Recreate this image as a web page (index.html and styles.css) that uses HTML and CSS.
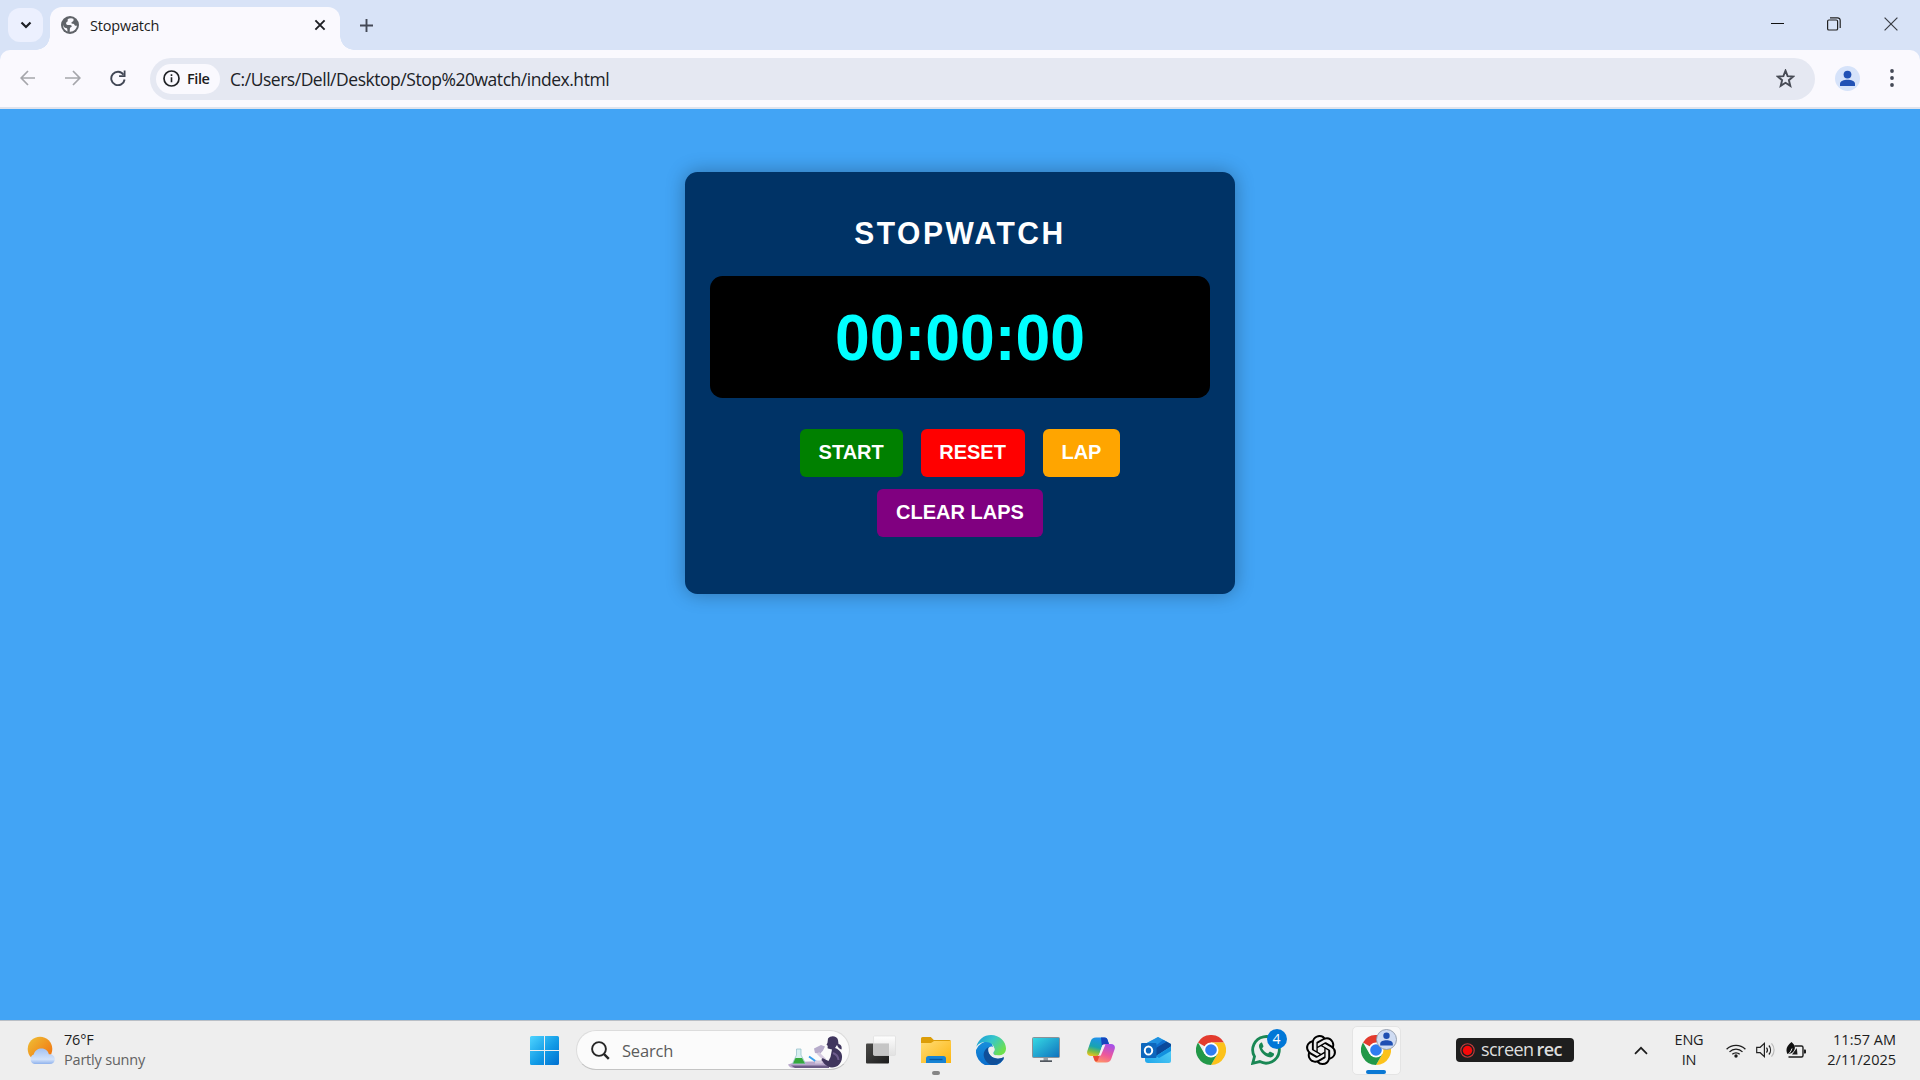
FILE: index.html
```html
<!DOCTYPE html>
<html lang="en">
<head>
<meta charset="utf-8">
<title>Stopwatch</title>
<link rel="stylesheet" href="styles.css">
</head>
<body>
<svg class="defs" width="0" height="0" aria-hidden="true">
  <defs>
    <linearGradient id="win" x1="0" y1="0" x2="1" y2="1"><stop offset="0" stop-color="#4fd4ff"/><stop offset=".55" stop-color="#129be6"/><stop offset="1" stop-color="#006fd0"/></linearGradient>
    <linearGradient id="sun" x1="0" y1="0" x2="1" y2="1"><stop offset="0" stop-color="#eec136"/><stop offset="1" stop-color="#f26a0c"/></linearGradient>
    <linearGradient id="cloud" x1="0" y1="0" x2="0" y2="1"><stop offset="0" stop-color="#a4c2f2"/><stop offset=".7" stop-color="#d3e3fb"/><stop offset="1" stop-color="#8fb2ec"/></linearGradient>
    <linearGradient id="folder" x1="0" y1="0" x2="1" y2="1"><stop offset="0" stop-color="#ffdc74"/><stop offset="1" stop-color="#fdb50f"/></linearGradient>
    <linearGradient id="screen" x1="0" y1="0" x2="1" y2="1"><stop offset="0" stop-color="#36dbe4"/><stop offset="1" stop-color="#0f70bd"/></linearGradient>
    <linearGradient id="edgeTop" x1="0" y1="0" x2="1" y2=".6"><stop offset="0" stop-color="#1796d8"/><stop offset=".5" stop-color="#36c6cb"/><stop offset="1" stop-color="#6ee04d"/></linearGradient>
    <linearGradient id="edgeLow" x1="0" y1="0" x2="0" y2="1"><stop offset="0" stop-color="#1890dc"/><stop offset="1" stop-color="#0a6ccb"/></linearGradient>
    <linearGradient id="copA" x1=".5" y1="0" x2=".2" y2="1"><stop offset="0" stop-color="#2090ee"/><stop offset=".5" stop-color="#18a4b0"/><stop offset=".75" stop-color="#76bd48"/><stop offset="1" stop-color="#f4c21a"/></linearGradient>
    <linearGradient id="copB" x1=".7" y1="0" x2=".3" y2="1"><stop offset="0" stop-color="#a650e8"/><stop offset=".55" stop-color="#ee589a"/><stop offset="1" stop-color="#ff9466"/></linearGradient>
    <linearGradient id="mail" x1="0" y1="1" x2="1" y2="0"><stop offset="0" stop-color="#1fa6ea"/><stop offset="1" stop-color="#62d8fa"/></linearGradient>
    <linearGradient id="dark" x1="0" y1="0" x2="1" y2="1"><stop offset="0" stop-color="#4a4a48"/><stop offset="1" stop-color="#1c1c1c"/></linearGradient>
    <linearGradient id="glass" x1="0" y1="0" x2="0" y2="1"><stop offset="0" stop-color="#fff"/><stop offset="1" stop-color="#dedede" stop-opacity=".8"/></linearGradient>
    <symbol id="chrome" viewBox="0 0 30 30">
      <path d="M15 15 2 7.5A15 15 0 0 1 28 7.5H15z" fill="#e33b2e"/>
      <path d="M15 7.5H28A15 15 0 0 1 15 30L21.5 18.7z" fill="#fcc21b"/>
      <path d="M2 7.5A15 15 0 0 0 15 30L21.5 18.8 8.5 18.8z" fill="#229848"/>
      <circle cx="15" cy="15" r="7.5" fill="#fff"/><circle cx="15" cy="15" r="5.8" fill="#2f7df1"/>
    </symbol>
  </defs>
</svg>

<header class="browser">
  <div class="tabstrip">
    <button class="tab-search" aria-label="Search tabs"><svg width="12" height="8" viewBox="0 0 12 8"><path d="M1.500 1.500 6 6l4.500-4.500" fill="none" stroke="#1d1f24" stroke-width="2.200"/></svg></button>
    <div class="tab">
      <svg width="18" height="18" viewBox="0 0 18 18"><circle cx="9" cy="9" r="9" fill="#5f6368"/><path d="M10 2.200c-3 .2-3.800 1-3.300 2.300.6 1.200-1.700 1.300-1.600 3 .2 1.600 2.100 1.800 3.600 1.500 1.500-.2 2.200.6 2 1.600-.2.900-1.700.8-1.800 1.800L8.700 15.800C13 16 15.800 12.800 15.900 9.600c-1.300.7-2.300-.1-2.600-1-.5-1-1.500-.6-2.500-1-.8-.4-.3-1.600.6-1.900 1.200-.4 1.500-1.500.9-2.900z" fill="#faf9fe"/><path d="M2.200 8.500c.3 3.500 2.300 3.200 3.500 3.800 1 .6.500 1.900.9 3.100C3.800 14.500 1.600 11.500 2.200 8.500z" fill="#faf9fe"/></svg>
      <span class="tab-title">Stopwatch</span>
      <svg class="tab-close" width="12" height="12" viewBox="0 0 12 12"><path d="m1.400 1.400 9.200 9.200m0-9.200-9.200 9.200" stroke="#1d1f24" stroke-width="1.900"/></svg>
    </div>
    <svg class="new-tab" width="13" height="13" viewBox="0 0 13 13"><path d="M6.500 0v13M0 6.500h13" stroke="#444956" stroke-width="1.900"/></svg>
    <div class="window-controls">
      <svg width="13" height="13" viewBox="0 0 13 13"><path d="M0 5.500h13" stroke="#111"/></svg>
      <svg width="14" height="14" viewBox="0 0 14 14" fill="none" stroke="#222" stroke-width="1.200"><rect x=".6" y="3" width="10" height="10" rx="1.300"/><path d="M3 .8h7.500a2.600 2.600 0 0 1 2.700 2.600V11"/></svg>
      <svg width="14" height="14" viewBox="0 0 14 14"><path d="m.6.6 12.800 12.800m0-12.800L.6 13.400" stroke="#3a3d45" stroke-width="1.200"/></svg>
    </div>
  </div>
  <div class="toolbar">
    <svg class="nav-back" width="16" height="16" viewBox="0 0 16 16" fill="none" stroke="#a5a6ab" stroke-width="1.700"><path d="M15 8H1.500M8 1 1.200 8 8 15"/></svg>
    <svg class="nav-forward" width="16" height="16" viewBox="0 0 16 16" fill="none" stroke="#a5a6ab" stroke-width="1.700"><path d="M0 8h14.500M8 1l6.800 7L8 15"/></svg>
    <svg class="nav-reload" width="16" height="16" viewBox="0 0 16 16"><path d="M13.500 4.700A6.700 6.700 0 1 0 14.600 9.500" fill="none" stroke="#414755" stroke-width="1.900"/><path d="M15.500.6V7H9.100V5.200h4.600V.6z" fill="#414755"/></svg>
    <div class="omnibox">
      <div class="chip">
        <svg width="17" height="17" viewBox="0 0 17 17"><circle cx="8.500" cy="8.500" r="7.500" fill="none" stroke="#1f2125" stroke-width="1.700"/><path d="M8.500 7.300v5M8.500 4.300v1.700" stroke="#1f2125" stroke-width="1.600"/></svg>
        <span>File</span>
      </div>
      <span class="url">C:/Users/Dell/Desktop/Stop%20watch/index.html</span>
      <svg class="star" width="19" height="19" viewBox="0 0 19 19"><path d="m9.500 1.700 2.100 5.400 5.700.4-4.400 3.700 1.400 5.700-4.800-3.100-4.800 3.100 1.400-5.700L1.700 7.500l5.700-.4z" fill="none" stroke="#474b55" stroke-width="1.900"/></svg>
    </div>
    <svg class="profile" width="25" height="25" viewBox="0 0 25 25"><circle cx="12.500" cy="12.500" r="12.500" fill="#d6e3fa"/><circle cx="12.500" cy="8.600" r="3.900" fill="#2151b5"/><path d="M5 20v-2.200c0-2.600 4-4 7.500-4s7.500 1.400 7.500 4V20z" fill="#2151b5"/></svg>
    <svg class="kebab" width="4" height="18" viewBox="0 0 4 18" fill="#444956"><circle cx="2" cy="2" r="1.900"/><circle cx="2" cy="9" r="1.900"/><circle cx="2" cy="16" r="1.900"/></svg>
  </div>
</header>

<main class="page">
  <section class="stopwatch">
    <h1 class="title">STOPWATCH</h1>
    <div class="display"><span class="time">00:00:00</span></div>
    <div class="buttons">
      <button class="btn start">START</button>
      <button class="btn reset">RESET</button>
      <button class="btn lap">LAP</button>
      <button class="btn clear">CLEAR LAPS</button>
    </div>
  </section>
</main>

<footer class="taskbar">
  <div class="weather">
    <svg width="29" height="29" viewBox="0 0 29 29"><circle cx="13" cy="13" r="12.300" fill="url(#sun)"/><path d="M7.500 28a5 5 0 0 1-.8-9.500C8 14.200 11 12.500 14.500 12.500c4 0 6.800 2.500 7.300 5.700 3.500-.4 6 1.800 6 4.800S26 28 22.500 28z" fill="url(#cloud)"/></svg>
    <div class="weather-text"><span class="temp">76°F</span><span class="condition">Partly sunny</span></div>
  </div>
  <svg class="start-menu" width="29" height="29" viewBox="0 0 29 29" fill="url(#win)"><path d="M1.500 0H14v14H0V1.500A1.500 1.500 0 0 1 1.500 0zM15 0h12.500A1.500 1.500 0 0 1 29 1.500V14H15zM0 15h14v14H1.500A1.500 1.500 0 0 1 0 27.500zM15 15h14v12.500a1.500 1.500 0 0 1-1.500 1.500H15z"/></svg>
  <div class="search">
    <svg width="19" height="19" viewBox="0 0 19 19" fill="none" stroke="#262626"><circle cx="8" cy="8" r="6.900" stroke-width="1.900"/><path d="m12.800 12.800 5 5" stroke-width="2.400"/></svg>
    <span class="search-label">Search</span>
    <svg class="search-art" width="56" height="32" viewBox="0 0 56 32">
      <path d="M0 28.500c8-3 20-3.500 35-2.500l6 1v5H6c-3 0-5-1-6-3.500z" fill="#b9a8cc"/><path d="M3 29.500h38V32H7z" fill="#6c5d87"/>
      <path d="M8.500 13v6L4.500 27.500h13L13 19v-6z" fill="#d8eff0" stroke="#8fbcc8" stroke-width=".7"/><path d="M7.500 22 5 27.500h12L14 22z" fill="#36a93c"/>
      <path d="m21 20.500 7 5" stroke="#3aa0ec" stroke-width="2"/>
      <path d="M26 12.500 33 9l4 1.500-2 4-3 3.500-5-1z" fill="#b7accb"/><path d="m30 17 6 6-3 3h-6" fill="none" stroke="#d5cbe0" stroke-width="3"/>
      <path d="M40 2.500c3-3.500 9-2.500 10 1.500l.5 4c3 .5 3.500 3 3 5.500-2-.5-3.500-2-4.500-4.500l-2 3c4 1.500 7.500 4.500 7 9.500-.3 6-4.500 10-10 10-3 0-5.500-2-7.500-3.500L33.500 24l1-2 6 3 2-4 1.500-7.500-4-1c-1-1 .2-1.500-.5-3l-1-.8 1-2z" fill="#40365e"/><path d="M45 17c3 1 5 3 5.500 7" fill="none" stroke="#6e5d8d" stroke-width="2"/>
    </svg>
  </div>
  <nav class="apps">
    <div class="app"><svg width="30" height="30" viewBox="0 0 30 30"><rect x="0" y="8.500" width="23" height="20" rx="1" fill="url(#dark)"/><rect x="7.500" y="1" width="22" height="19.500" rx="1" fill="url(#glass)" stroke="#ddd" stroke-width=".7"/><path d="M7.500 8.500H23v11.500H7.500z" fill="#c5c5c5"/></svg></div>
    <div class="app"><svg width="30" height="30" viewBox="0 0 30 30"><path d="M0 3.500A1.500 1.500 0 0 1 1.500 2h8.300l3 3H28.500A1.500 1.500 0 0 1 30 6.500V12H0z" fill="#dc9d08"/><path d="M0 8h10l3-2h17v22H0z" fill="url(#folder)"/><path d="M5 28v-4.500A2.500 2.500 0 0 1 7.500 21h15a2.500 2.500 0 0 1 2.500 2.500V28z" fill="#1783d4"/><path d="M8.500 24.500h13" stroke="#0758a0" stroke-width="1.300"/></svg><i class="dot"></i></div>
    <div class="app"><svg width="30" height="30" viewBox="0 0 30 30"><path d="M0 15A15 15 0 0 1 15 6l5 15 7.800 3A15 15 0 0 1 0 15z" fill="url(#edgeLow)"/><path d="M.3 12C2 4.500 8 0 15 0c8.800 0 15 6.500 15 13.500 0 4.500-3.500 7-7.500 7-3 0-5-1-5-2s1-1.500 1-4C18.500 10 14.500 7 9.800 7 5.500 7 1.800 9 .3 12z" fill="url(#edgeTop)"/><path d="M12.500 12c-4 2.500-5.500 6-4.500 10s4.500 7.500 8 8c5.500 0 9.500-2.500 11.800-6.500.3-.8-.3-1.200-1-.8-2 1-4.500 1.300-7 .8-5.500-1.100-8.500-6.500-7.300-11.500z" fill="#104f99"/><path d="M12.300 13.500c.8-1.600 2.200-2.300 3.700-2 1.800.3 2.700 1.800 2.500 3.300-.2 1.700-1.100 2.400-1 3.700.1 1.500 2.500 2.100 5 2.100 2.600 0 4.400-.6 6-2.100-.7 2.400-2 4-3.500 4.700-2 .7-5 .6-7.500-.6-3.600-1.700-5.700-5-5.200-9.100z" fill="#eee"/><path d="M12.200 15c0 5 4.400 8.800 9.300 8.800 2.800 0 5-1 6.400-2-.5 2-2.400 3.700-5.400 4-5 .4-10.500-2.800-10.300-10.800z" fill="#104f99"/></svg></div>
    <div class="app"><svg width="28" height="26" viewBox="0 0 28 26"><rect x=".5" y=".5" width="27" height="20" rx="1" fill="url(#screen)" stroke="#8b9198"/><path d="M11.500 21h4.500v3h-4.500z" fill="#9aa0a6"/><path d="M8 23.300h12V25H8z" fill="#50565e"/></svg></div>
    <div class="app"><svg width="28" height="26" viewBox="0 0 28 26"><path d="M9 .5h8.500c2 0 2.800 1.300 3.300 3L22 7h-3.500c-2 0-3 1-3.700 3L12 18c-.7 1.500-1.500 1-3 1H4c-3 0-4.500-2-3.700-5L3.800 4C4.600 1.700 6 .5 9 .5z" fill="url(#copA)"/><path d="M14 .5h3.500c2 0 2.800 1.300 3.300 3L22 7h-3.500c-2 0-3 .5-3.700 2z" fill="#1545bd"/><path d="M19 25.500h-8.500c-2 0-2.800-1.300-3.300-3L6 19h3.500c2 0 3-1 3.700-3L16 8c.7-1 1.500-1 3-1h5c3 0 4.500 2 3.700 5l-3.500 10c-.8 2.300-2.200 3.500-5.200 3.500z" fill="url(#copB)"/><path d="M6 19h3.500c2 0 3-.7 3.700-2.200l-2.500 7c-1.700 1.300-3 .3-3.500-1.300z" fill="#e94b35"/><path d="m15.500 8 3-.6-4.700 11-3.300.6c1-.4 1.500-1.200 2-2.500z" fill="#f4eff4"/></svg></div>
    <div class="app"><svg width="30" height="28" viewBox="0 0 30 28"><path d="M4 8 17 1l13 7v17a2 2 0 0 1-2 2H7a3 3 0 0 1-3-3z" fill="url(#mail)"/><path d="M4 8 17 1l8.500 4.600L12 14z" fill="#1f8fe0"/><path d="M12 12.500 25.500 5.500 30 8v2.500L15 20h-3z" fill="#0b4a9c"/><path d="M15 9.500 22 4l3.500 1.600L15 12z" fill="#0f6fd0"/><path d="M15 20 30 10.500V15L18 22z" fill="#1290de"/><rect y="7" width="15.500" height="15" rx="1" fill="#0d67bd"/><ellipse cx="7.500" cy="14.500" rx="3.700" ry="4.100" fill="none" stroke="#fff" stroke-width="2"/></svg></div>
    <div class="app"><svg width="30" height="30"><use href="#chrome"/></svg></div>
    <div class="app"><svg width="30" height="30" viewBox="0 0 30 30"><path d="M1.700 28.300 3.500 21.500A13.300 13.300 0 1 1 8.800 26.600z" fill="none" stroke="#198754" stroke-width="2.800"/><path d="M10.200 7.500c-1.800 1-2.600 2.800-2 5 1.500 5 5.200 8.700 10 9.800 2 .5 4-.6 4.700-2.400.3-.9.200-1.300-.4-1.600l-3-1.500c-.5-.2-.9-.1-1.200.3l-1.200 1.500c-2.800-1-4.800-2.900-6-5.300l1.100-1.400c.3-.4.300-.7.100-1.200l-1.200-2.900c-.2-.4-.5-.5-.9-.3z" fill="#198754"/></svg><span class="count">4</span></div>
    <div class="app"><svg width="30" height="30" viewBox="0 0 24 24"><path d="M22.2819 9.8211a5.9847 5.9847 0 0 0-.5157-4.9108 6.0462 6.0462 0 0 0-6.5098-2.9A6.0651 6.0651 0 0 0 4.9807 4.1818a5.9847 5.9847 0 0 0-3.9977 2.9 6.0462 6.0462 0 0 0 .7427 7.0966 5.98 5.98 0 0 0 .511 4.9107 6.051 6.051 0 0 0 6.5146 2.9001A5.9847 5.9847 0 0 0 13.2599 24a6.0557 6.0557 0 0 0 5.7718-4.2058 5.9894 5.9894 0 0 0 3.9977-2.9001 6.0557 6.0557 0 0 0-.7475-7.0729zm-9.022 12.6081a4.4755 4.4755 0 0 1-2.8764-1.0408l.1419-.0804 4.7783-2.7582a.7948.7948 0 0 0 .3927-.6813v-6.7369l2.02 1.1686a.071.071 0 0 1 .038.052v5.5826a4.504 4.504 0 0 1-4.4945 4.4944zm-9.6607-4.1254a4.4708 4.4708 0 0 1-.5346-3.0137l.142.0852 4.783 2.7582a.7712.7712 0 0 0 .7806 0l5.8428-3.3685v2.3324a.0804.0804 0 0 1-.0332.0615L9.74 19.9502a4.4992 4.4992 0 0 1-6.1408-1.6464zM2.3408 7.8956a4.485 4.485 0 0 1 2.3655-1.9728V11.6a.7664.7664 0 0 0 .3879.6765l5.8144 3.3543-2.0201 1.1685a.0757.0757 0 0 1-.071 0l-4.8303-2.7865A4.504 4.504 0 0 1 2.3408 7.872zm16.5963 3.8558L13.1038 8.364 15.1192 7.2a.0757.0757 0 0 1 .071 0l4.8303 2.7913a4.4944 4.4944 0 0 1-.6765 8.1042v-5.6772a.79.79 0 0 0-.407-.667zm2.0107-3.0231l-.142-.0852-4.7735-2.7818a.7759.7759 0 0 0-.7854 0L9.409 9.2297V6.8974a.0662.0662 0 0 1 .0284-.0615l4.8303-2.7866a4.4992 4.4992 0 0 1 6.6802 4.66zM8.3065 12.863l-2.02-1.1638a.0804.0804 0 0 1-.038-.0567V6.0742a4.4992 4.4992 0 0 1 7.3757-3.4537l-.142.0805L8.704 5.459a.7948.7948 0 0 0-.3927.6813zm1.0976-2.3654l2.602-1.4998 2.6069 1.4998v2.9994l-2.5974 1.4997-2.6067-1.4997Z" fill="#000"/></svg></div>
    <div class="app"><div class="tile"><svg width="30" height="30"><use href="#chrome"/></svg><svg class="avatar" width="21" height="21" viewBox="0 0 21 21"><circle cx="10.500" cy="10.500" r="10" fill="#cfdcf3" stroke="#8f98a8" stroke-width=".9"/><circle cx="10.500" cy="6.800" r="3.200" fill="#1f4fb2"/><path d="M4.200 16.500v-1.800c0-2.300 3.200-3.400 6.300-3.400s6.300 1.100 6.300 3.400v1.800z" fill="#1f4fb2"/></svg><i class="active-bar"></i></div></div>
  </nav>
  <div class="recorder">
    <svg width="15" height="15" viewBox="0 0 15 15"><circle cx="7.500" cy="7.500" r="6.700" fill="none" stroke="#c43c3c" stroke-width="1.100"/><circle cx="7.500" cy="7.500" r="4.700" fill="#f80808"/></svg>
    <span class="rec-name">screen<b>rec</b></span>
  </div>
  <svg class="tray-caret" width="14" height="9" viewBox="0 0 14 9"><path d="m1 7.800 6-6 6 6" fill="none" stroke="#1d1d1d" stroke-width="1.700"/></svg>
  <div class="lang"><span>ENG</span><span>IN</span></div>
  <div class="tray">
    <svg width="20" height="15" viewBox="0 0 20 15" fill="none" stroke="#1d1d1d" stroke-width="1.300"><path d="M.6 6.300a13.300 13.300 0 0 1 18.800 0M3.500 8.900a9.200 9.200 0 0 1 13 0M6.300 11.300a5.300 5.300 0 0 1 7.400 0"/><circle cx="10" cy="13" r="1.700" fill="#1d1d1d" stroke="none"/></svg>
    <svg width="20" height="16" viewBox="0 0 20 16" fill="none" stroke="#222" stroke-width="1.200"><path d="M.7 5.300h3.500L8.400 1.400v13.200L4.200 10.700H.7z"/><path d="M10.500 5.500a4 4 0 0 1 0 5M12.900 3.500a7 7 0 0 1 0 9"/><path d="M15.500 1.300a10 10 0 0 1 0 13.400" stroke="#bbb"/></svg>
    <svg width="20" height="16" viewBox="0 0 20 16"><path d="M8.500 4h7A1.500 1.500 0 0 1 17 5.500v8a1.500 1.500 0 0 1-1.500 1.500H2.500" fill="none" stroke="#1d1d1d" stroke-width="1.400"/><path d="M18 7.500h1.200a.8.800 0 0 1 .8.800v2.400a.8.800 0 0 1-.8.800H18z" fill="#1d1d1d"/><path d="M5.500 0c3 2.500 4 4.800 3 7.500C7.500 10.500 4.500 12 1.500 12-.8 8 .8 3.500 5.500 0z" fill="#111"/><path d="M0 13.800C2.500 12.500 5 10 6 6.500" fill="none" stroke="#eee" stroke-width="1"/><path d="m10.800 6 .7 6.500H6z" fill="#1d1d1d"/></svg>
  </div>
  <div class="clock"><span>11:57 AM</span><span>2/11/2025</span></div>
</footer>
</body>
</html>
```
FILE: styles.css
```css
* { box-sizing: border-box; }
body {
  margin: 0;
  width: 1920px;
  height: 1080px;
  overflow: hidden;
  display: flex;
  flex-direction: column;
  font-family: "Open Sans", "Noto Sans", sans-serif;
  color: #1d1d1d;
}
svg { display: block; flex: none; }
span { white-space: nowrap; }
.defs { position: absolute; }

/* Browser frame */
.browser { height: 109px; background: #d8e3f7; }
.tabstrip { display: flex; align-items: flex-start; height: 50px; padding-left: 8px; }
.tab-search {
  width: 35px; height: 34px; margin-top: 8px; padding: 0;
  border: 0; border-radius: 12px; background: #ecf0fe;
  display: grid; place-items: center;
}
.tab {
  position: relative;
  display: flex; align-items: center;
  width: 290px; height: 43px; margin: 7px 0 0 7px; padding: 0 14px 7px 11px;
  border-radius: 12px 12px 0 0; background: #faf9fe;
}
.tab::before, .tab::after {
  content: ""; position: absolute; bottom: 0; width: 14px; height: 14px;
}
.tab::before { left: -14px; background: radial-gradient(circle at 0 0, transparent 13.5px, #faf9fe 14px); }
.tab::after { right: -14px; background: radial-gradient(circle at 100% 0, transparent 13.5px, #faf9fe 14px); }
.tab-title { margin-left: 11px; font-size: 14.5px; letter-spacing: -0.2px; }
.tab-close { margin-left: auto; }
.new-tab { margin: 19px 0 0 19.5px; }
.window-controls { display: flex; align-items: center; gap: 43px; margin: 17px 22px 0 auto; }

.toolbar {
  display: flex; align-items: center;
  height: 59px; padding: 0 26px 1px 20px;
  border-bottom: 2px solid #dfe3ed; border-radius: 10px 10px 0 0; background: #faf9fe;
}
.nav-forward { margin-left: 29px; }
.nav-reload { margin-left: 29px; }
.omnibox {
  display: flex; align-items: center;
  width: 1665px; height: 42px; margin: 1px 0 0 24px; padding: 0 20px 0 6px;
  border-radius: 21px; background: #e5e8f2;
}
.chip {
  display: flex; align-items: center; gap: 7px;
  width: 64px; height: 30px; padding-left: 7px;
  border-radius: 15px; background: #faf9fe;
  font-size: 14.5px; font-weight: 600; letter-spacing: -0.4px;
}
.url { margin-left: 10px; font-size: 17.5px; letter-spacing: -0.47px; color: #202227; }
.star { margin-left: auto; }
.profile { margin-left: 20px; }
.kebab { margin-left: auto; }

/* Page */
.page { height: 911px; padding-top: 63px; background: #42a4f5; font-family: "Liberation Sans", Arial, sans-serif; }
.stopwatch {
  width: 550px; height: 422px; margin: 0 auto; padding: 42px 25px 0;
  border-radius: 12.5px; background: #003366;
  box-shadow: 0 0 19px rgba(0, 0, 0, 0.3);
  text-align: center;
}
.title { margin: 0 0 25px; font-size: 30px; line-height: 37px; letter-spacing: 2.5px; color: #fff; transform: scaleY(1.05); }
.display {
  height: 122px; border-radius: 12.5px; background: #000;
  font-size: 62.5px; font-weight: bold; line-height: 122px; color: #0ff;
}
.time { display: inline-block; transform: scaleY(1.04); }
.buttons { display: flex; flex-wrap: wrap; justify-content: center; gap: 12px 18px; margin-top: 31px; padding: 0 85px; }
.btn {
  height: 48px; padding: 0 18.75px 2px; border: 0; border-radius: 6px;
  font: bold 20px "Liberation Sans", Arial, sans-serif; color: #fff;
}
.start { background: #008000; }
.reset { background: #f00; }
.lap { background: #ffa500; }
.clear { background: #800080; }

/* Taskbar */
.taskbar { display: flex; align-items: center; height: 60px; padding-bottom: 1px; background: #eee; border-top: 1px solid #b9bfc6; }
.weather { display: flex; align-items: center; gap: 8px; width: 530px; padding-left: 27px; }
.weather-text, .lang, .clock { display: flex; flex-direction: column; line-height: 20px; font-size: 14.5px; letter-spacing: -0.2px; }
.condition { color: #626262; }
.search {
  display: flex; align-items: center;
  width: 274px; height: 40px; margin-left: 17px; padding: 0 5px 0 14px;
  border: 1px solid #dcdcdc; border-bottom-color: #c4c4c4; border-radius: 20px; background: #fbfbfb;
}
.search-label { margin-left: 12px; font-size: 16.5px; letter-spacing: -0.2px; color: #5c5c5c; }
.search-art { margin: 3px 0 0 auto; }
.apps { display: flex; margin-left: 3.5px; }
.app { position: relative; display: grid; place-items: center; width: 55px; height: 59px; }
.dot { position: absolute; left: 23px; bottom: 5px; width: 8px; height: 4px; border-radius: 2px; background: #858585; }
.count {
  position: absolute; left: 28px; top: 8px; width: 20px; height: 20px;
  border-radius: 50%; background: #0077d7; color: #fff; font-size: 14px; line-height: 20px; text-align: center;
}
.tile {
  position: relative; display: grid; place-items: center;
  width: 49px; height: 49px; border: 1px solid #e4e4e4; border-radius: 5px; background: #f8f8f8;
}
.avatar { position: absolute; right: 3px; top: 2px; }
.active-bar { position: absolute; left: 13px; bottom: 0; width: 20px; height: 4px; border-radius: 2px; background: #0a78d4; }
.recorder {
  display: flex; align-items: center; gap: 6px;
  width: 118px; height: 24px; margin-left: 52.5px; padding-left: 4px;
  border-radius: 4px; background: #1e1e1e; color: #ddd;
}
.rec-name { font-size: 18px; font-weight: 500; line-height: 22px; letter-spacing: -0.55px; padding-bottom: 3px; }
.rec-name b { margin-left: 3px; font-weight: 600; }
.tray-caret { margin-left: 60px; }
.lang { width: 50px; margin-left: 16px; text-align: center; }
.tray { display: flex; align-items: center; gap: 10px; margin-left: 12px; }
.clock { margin: 0 24px 0 auto; text-align: right; letter-spacing: 0; }
```
